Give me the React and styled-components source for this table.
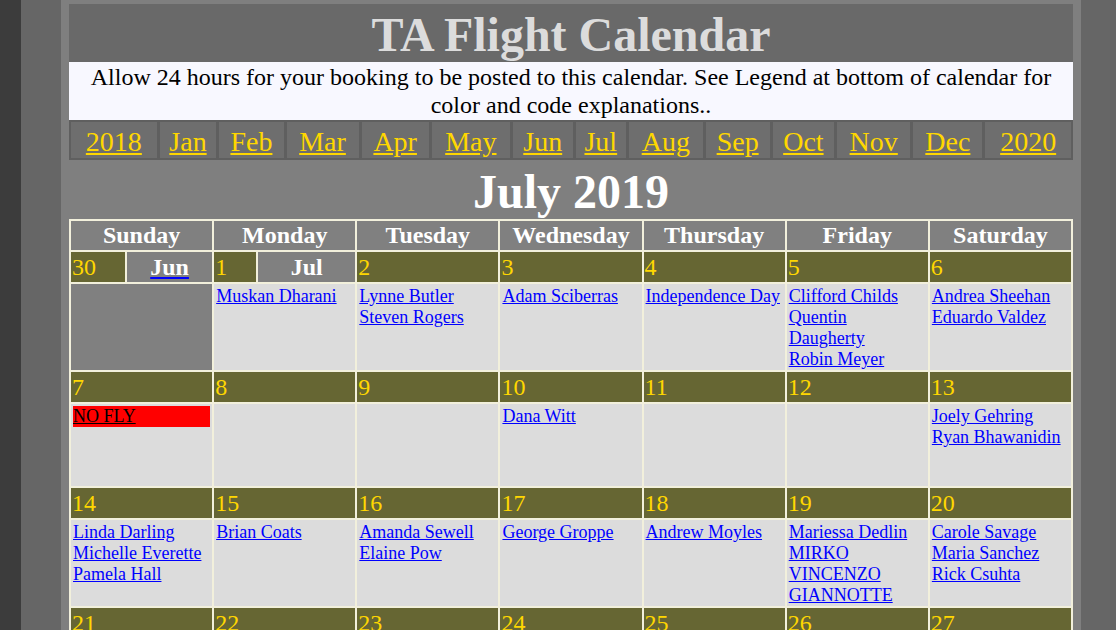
import styled, { createGlobalStyle } from 'styled-components';

const GlobalStyle = createGlobalStyle`
  body {
    margin: 0;
    background: #666666;
    font-family: "Liberation Serif", "Times New Roman", serif;
  }
`;

const Page = styled.div`
  display: flex;
  min-height: 100vh;
  overflow: hidden;
`;

const Edge = styled.div`
  flex: 0 0 21px;
  background: #3c3c3c;
`;

const Frame = styled.div`
  flex: 0 0 1020px;
  margin-left: 40px;
  padding: 4px 8px 8px;
  box-sizing: border-box;
  background: #7f7f7f;
`;

const Banner = styled.div`
  background: #696969;
  height: 58px;
  box-sizing: border-box;
  padding-top: 3px;
  display: flex;
  align-items: center;
  justify-content: center;
`;

const Title = styled.h1`
  margin: 0;
  font-size: 48px;
  font-weight: bold;
  color: #dcdcdc;
`;

const Notice = styled.p`
  margin: 0;
  background: #f8f8ff;
  color: #000;
  font-size: 24px;
  line-height: 28px;
  text-align: center;
  padding: 1px 20px 1px;
  height: 58px;
  box-sizing: border-box;
`;

const MonthNav = styled.nav`
  display: flex;
  gap: 3px;
  padding: 2px;
  background: #5f5f5f;
`;

const NavCell = styled.div`
  flex: ${(p) => p.$weight} 1 0;
  background: #6e6e6e;
  height: 36px;
  box-sizing: border-box;
  padding-top: 3px;
  display: flex;
  align-items: center;
  justify-content: center;
`;

const NavLink = styled.a`
  color: #ffd700;
  font-size: 28px;
  text-decoration: underline;
  cursor: pointer;
`;

const MonthTitle = styled.h2`
  margin: 0;
  height: 59px;
  box-sizing: border-box;
  padding-top: 4px;
  display: flex;
  align-items: center;
  justify-content: center;
  font-size: 48px;
  font-weight: bold;
  color: #ffffff;
`;

const Calendar = styled.div`
  display: grid;
  grid-template-columns: repeat(7, 1fr);
  gap: 2px;
  padding: 2px;
  background: #f2f0dc;
`;

const DayHead = styled.div`
  background: #808080;
  color: #ffffff;
  font-size: 24px;
  font-weight: bold;
  text-align: center;
  height: 29px;
  line-height: 29px;
`;

const NumCell = styled.div`
  display: grid;
  grid-template-columns: ${(p) => (p.$split ? `${p.$split}px 1fr` : '1fr')};
  gap: 2px;
  height: 30px;
  background: #f2f0dc;
`;

const DayNum = styled.div`
  background: #666633;
  color: #ffd700;
  font-size: 24px;
  line-height: 30px;
  padding-left: 1px;
`;

const MonthTag = styled.a`
  background: #808080;
  color: #ffffff;
  font-size: 24px;
  font-weight: bold;
  line-height: 30px;
  text-align: center;
  text-decoration: none;

  span {
    text-decoration: ${(p) => (p.$linked ? 'underline' : 'none')};
    text-decoration-color: #0000ff;
  }
`;

const Slot = styled.div`
  background: ${(p) => (p.$outside ? '#808080' : '#dcdcdc')};
  min-height: 82px;
  box-sizing: border-box;
  padding: 2px 2px 0;
  display: flex;
  flex-direction: column;
  align-items: flex-start;
`;

const Booking = styled.a`
  color: #0000ff;
  font-size: 18px;
  line-height: 21px;
  text-decoration: underline;
  cursor: pointer;
`;

const Blocked = styled.a`
  align-self: stretch;
  background: #ff0000;
  color: #000000;
  font-size: 18px;
  line-height: 21px;
  text-decoration: underline;
`;

const navItems = [
  ['2018', 56], ['Jan', 37], ['Feb', 42], ['Mar', 47], ['Apr', 44],
  ['May', 51], ['Jun', 39], ['Jul', 33], ['Aug', 48], ['Sep', 42],
  ['Oct', 40], ['Nov', 48], ['Dec', 45], ['2020', 56],
];

const dayNames = ['Sunday', 'Monday', 'Tuesday', 'Wednesday', 'Thursday', 'Friday', 'Saturday'];

const weeks = [
  [
    { n: 30, month: 'Jun', split: 54, linked: true, outside: true, names: [] },
    { n: 1, month: 'Jul', split: 42, names: ['Muskan Dharani'] },
    { n: 2, names: ['Lynne Butler', 'Steven Rogers'] },
    { n: 3, names: ['Adam Sciberras'] },
    { n: 4, names: ['Independence Day'] },
    { n: 5, names: ['Clifford Childs', 'Quentin Daugherty', 'Robin Meyer'] },
    { n: 6, names: ['Andrea Sheehan', 'Eduardo Valdez'] },
  ],
  [
    { n: 7, noFly: true, names: [] },
    { n: 8, names: [] },
    { n: 9, names: [] },
    { n: 10, names: ['Dana Witt'] },
    { n: 11, names: [] },
    { n: 12, names: [] },
    { n: 13, names: ['Joely Gehring', 'Ryan Bhawanidin'] },
  ],
  [
    { n: 14, names: ['Linda Darling', 'Michelle Everette', 'Pamela Hall'] },
    { n: 15, names: ['Brian Coats'] },
    { n: 16, names: ['Amanda Sewell', 'Elaine Pow'] },
    { n: 17, names: ['George Groppe'] },
    { n: 18, names: ['Andrew Moyles'] },
    { n: 19, names: ['Mariessa Dedlin', 'MIRKO VINCENZO GIANNOTTE'] },
    { n: 20, names: ['Carole Savage', 'Maria Sanchez', 'Rick Csuhta'] },
  ],
  [21, 22, 23, 24, 25, 26, 27].map((n) => ({ n, names: [] })),
];

export default function App() {
  return (
    <Page>
      <GlobalStyle />
      <Edge />
      <Frame>
        <Banner>
          <Title>TA Flight Calendar</Title>
        </Banner>
        <Notice>
          Allow 24 hours for your booking to be posted to this calendar. See Legend at bottom of
          calendar for color and code explanations..
        </Notice>
        <MonthNav>
          {navItems.map(([label, weight]) => (
            <NavCell key={label} $weight={weight}>
              <NavLink>{label}</NavLink>
            </NavCell>
          ))}
        </MonthNav>
        <MonthTitle>July 2019</MonthTitle>
        <Calendar>
          {dayNames.map((d) => (
            <DayHead key={d}>{d}</DayHead>
          ))}
          {weeks.map((week, w) => (
            <>
              {week.map((day) => (
                <NumCell key={`n${w}-${day.n}`} $split={day.split}>
                  <DayNum>{day.n}</DayNum>
                  {day.month && (
                    <MonthTag $linked={day.linked}>
                      <span>{day.month}</span>
                    </MonthTag>
                  )}
                </NumCell>
              ))}
              {week.map((day) => (
                <Slot key={`s${w}-${day.n}`} $outside={day.outside}>
                  {day.noFly && <Blocked>NO FLY</Blocked>}
                  {day.names.map((name) => (
                    <Booking key={name}>{name}</Booking>
                  ))}
                </Slot>
              ))}
            </>
          ))}
        </Calendar>
      </Frame>
    </Page>
  );
}
